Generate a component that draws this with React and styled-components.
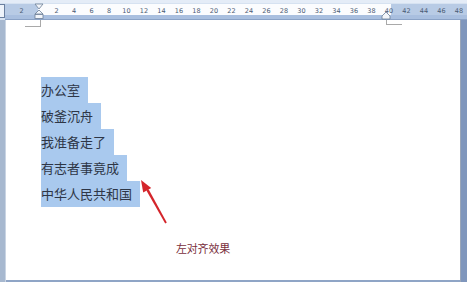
import React from 'react'
import styled, { createGlobalStyle } from 'styled-components'

const Global = createGlobalStyle`
  html, body { margin: 0; padding: 0; }
  body { background: #8fa5c6; font-family: "Noto Sans CJK SC", "Noto Sans", sans-serif; }
`

const Window = styled.div`
  width: 467px;
  height: 282px;
  display: flex;
  flex-direction: column;
  overflow: hidden;
  background: #8fa5c6;
`

const RulerBar = styled.div`
  height: 20px;
  background: #d6e2f1;
  border-top: 3px solid #e4ecf7;
  box-sizing: border-box;
  position: relative;
  display: flex;
  align-items: stretch;
`

const RulerCorner = styled.div`
  width: 5px;
  margin: 1px 0 2px;
  border: 1px solid #6a7f9f;
  border-left: none;
  background: #eef3fa;
  box-sizing: border-box;
`

const RulerTrack = styled.div`
  flex: 1;
  display: flex;
  flex-direction: column;
  margin-top: 1px;
`

const RulerFace = styled.div`
  height: 11px;
  display: flex;
`

const Margin = styled.div`
  width: ${p => p.$w}px;
  background: #b8cbe5;
`

const TextZone = styled.div`
  flex: 1;
  background: #fbfcfe;
`

const RulerBottom = styled.div`
  height: 5px;
  background: #a9bfdf;
  border-bottom: 1px solid #8aa2c6;
  box-sizing: border-box;
`

const Numbers = styled.div`
  position: absolute;
  left: 12.75px;
  top: 3px;
  height: 11px;
  display: flex;
  pointer-events: none;
`

const Num = styled.span`
  width: 17.5px;
  flex: none;
  text-align: center;
  font-family: "DejaVu Sans", sans-serif;
  font-size: 6.5px;
  line-height: 11px;
  color: #4b5b74;
`

const Marker = styled.svg`
  position: absolute;
  top: 0;
`

const Body = styled.div`
  flex: 1;
  display: flex;
`

const LeftStrip = styled.div`
  width: 5px;
  background: #a7b8cf;
  border-right: 1px solid #c9d4e3;
`

const RightStrip = styled.div`
  width: 6px;
  background: #7f96bc;
  border-left: 1px solid #9aa6b8;
`

const Page = styled.div`
  flex: 1;
  background: #ffffff;
  position: relative;
  padding: 57px 0 0 35px;
  margin-bottom: 2px;
`

const CropMark = styled.div`
  position: absolute;
  top: 0;
  left: ${p => p.$x}px;
  width: 15px;
  height: ${p => p.$h}px;
  border-bottom: 1px solid #a9a9a9;
  ${p => (p.$side === 'left' ? 'border-right' : 'border-left')}: 1px solid #a9a9a9;
`

const Lines = styled.div`
  display: flex;
  flex-direction: column;
  align-items: flex-start;
`

const Line = styled.div`
  background: #a9c9ee;
  color: #2e3646;
  font-size: 13px;
  line-height: 26px;
  height: 26px;
  padding-right: 8px;
  white-space: nowrap;
`

const Caption = styled.div`
  margin: 33px 0 0 135px;
  font-size: 11px;
  color: #7a2f3d;
  letter-spacing: -0.2px;
`

const Arrow = styled.svg`
  position: absolute;
  left: 130px;
  top: 150px;
`

const lines = ['办公室', '破釜沉舟', '我准备走了', '有志者事竟成', '中华人民共和国']
const labels = ['2', '', ...Array.from({ length: 24 }, (_, i) => String((i + 1) * 2))]

export default function App() {
  return (
    <Window>
      <Global />
      <RulerBar>
        <RulerCorner />
        <RulerTrack>
          <RulerFace>
            <Margin $w={33} />
            <TextZone />
            <Margin $w={76} />
          </RulerFace>
          <RulerBottom />
        </RulerTrack>
        <Numbers>
          {labels.map((l, i) => (
            <Num key={i}>{l}</Num>
          ))}
        </Numbers>
        <Marker width="10" height="18" viewBox="0 0 10 18" style={{ left: 34 }}>
          <path d="M1 1 H9 L5 6 Z" fill="#f2f5fa" stroke="#6b7d96" strokeWidth="0.8" />
          <path d="M5 7 L9 11 H1 Z" fill="#f2f5fa" stroke="#6b7d96" strokeWidth="0.8" />
          <rect x="1" y="11.5" width="8" height="4" fill="#f2f5fa" stroke="#6b7d96" strokeWidth="0.8" />
        </Marker>
        <Marker width="10" height="18" viewBox="0 0 10 18" style={{ left: 381 }}>
          <path d="M5 9 L9 13 V16 H1 V13 Z" fill="#f2f5fa" stroke="#6b7d96" strokeWidth="0.8" />
        </Marker>
      </RulerBar>
      <Body>
        <LeftStrip />
        <Page>
          <CropMark $x={19} $h={6} $side="left" />
          <CropMark $x={380} $h={4} $side="right" />
          <Lines>
            {lines.map(t => (
              <Line key={t}>{t}</Line>
            ))}
          </Lines>
          <Caption>左对齐效果</Caption>
          <Arrow width="40" height="60" viewBox="0 0 40 60">
            <path d="M29.2 53.6 L30.8 52.4 L12.6 19.2 L10.4 20.6 Z" fill="#d4252b" />
            <path d="M5 10 L15.2 18 L7.2 22.6 Z" fill="#d4252b" />
          </Arrow>
        </Page>
        <RightStrip />
      </Body>
    </Window>
  )
}
